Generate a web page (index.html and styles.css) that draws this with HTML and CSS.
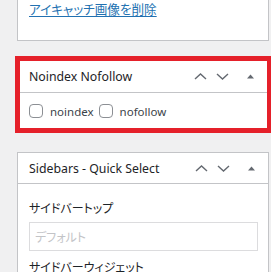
FILE: index.html
```html
<!DOCTYPE html>
<html lang="ja">
<head>
<meta charset="utf-8">
<link rel="stylesheet" href="styles.css">
</head>
<body>
<div class="postbox top-box">
  <a class="remove-link" href="#">アイキャッチ画像を削除</a>
</div>
<div class="highlight">
  <div class="box-header">
    <span class="box-title">Noindex Nofollow</span>
    <div class="box-actions">
      <span class="act"><svg width="13" height="7" viewBox="0 0 13 7"><polyline points="1,6 6.5,1 12,6" /></svg></span>
      <span class="act"><svg width="13" height="7" viewBox="0 0 13 7"><polyline points="1,1 6.5,6 12,1" /></svg></span>
      <span class="act tri"><svg width="7" height="5" viewBox="0 0 7 5"><polygon points="0,4.5 3.5,0.5 7,4.5" /></svg></span>
    </div>
  </div>
  <div class="nn-body">
    <label class="chk"><span class="cb"></span>noindex</label>
    <label class="chk"><span class="cb"></span>nofollow</label>
  </div>
</div>
<div class="postbox sidebars">
  <div class="box-header">
    <span class="box-title">Sidebars - Quick Select</span>
    <div class="box-actions">
      <span class="act"><svg width="13" height="7" viewBox="0 0 13 7"><polyline points="1,6 6.5,1 12,6" /></svg></span>
      <span class="act"><svg width="13" height="7" viewBox="0 0 13 7"><polyline points="1,1 6.5,6 12,1" /></svg></span>
      <span class="act tri"><svg width="7" height="5" viewBox="0 0 7 5"><polygon points="0,4.5 3.5,0.5 7,4.5" /></svg></span>
    </div>
  </div>
  <div class="sb-body">
    <div class="sb-label">サイドバートップ</div>
    <div class="sb-input">デフォルト</div>
    <div class="sb-label next">サイドバーウィジェット</div>
  </div>
</div>
</body>
</html>
```
FILE: styles.css
```css
html, body {
  margin: 0;
  padding: 0;
}
body {
  background: #f0f0f1;
  overflow: hidden;
  width: 271px;
  height: 272px;
  font-family: "Noto Sans", "Noto Sans CJK JP", sans-serif;
  color: #1d2327;
}
.postbox {
  margin-left: 17px;
  width: 252px;
  box-sizing: border-box;
  background: #fff;
  border: 1px solid #c3c4c7;
}
.top-box {
  border-top: none;
  height: 41px;
  padding-left: 11px;
}
.remove-link {
  display: block;
  font-family: "Noto Sans CJK JP", sans-serif;
  font-feature-settings: "palt";
  font-size: 12.6px;
  line-height: 18px;
  color: #2271b1;
  text-decoration: underline;
  text-underline-offset: 2px;
}
.highlight {
  margin-top: 15px;
  margin-left: 15px;
  width: 257px;
  height: 77px;
  box-sizing: border-box;
  border: 5px solid #e5202a;
  background: #fff;
}
.box-header {
  display: flex;
  align-items: center;
  justify-content: space-between;
  height: 31px;
  border-bottom: 1px solid #c3c4c7;
}
.highlight .box-header {
  padding-left: 9px;
  padding-right: 6px;
}
.sidebars {
  margin-top: 19px;
}
.sidebars .box-header {
  height: 30px;
  padding-left: 11px;
  padding-right: 6px;
}
.box-title {
  font-size: 12.3px;
  color: #1d2327;
}
.box-actions {
  display: flex;
  align-items: center;
}
.act {
  display: flex;
  width: 22px;
  justify-content: center;
  align-items: center;
}
.act.tri {
  margin-left: 6px;
}
.act polyline {
  fill: none;
  stroke: #646970;
  stroke-width: 1.4;
}
.act polygon {
  fill: #646970;
}
.nn-body {
  display: flex;
  align-items: center;
  padding-left: 9px;
  height: 36px;
  font-size: 11.5px;
  color: #3c434a;
}
.chk {
  display: flex;
  align-items: center;
  margin-right: 5px;
}
.cb {
  width: 14px;
  height: 14px;
  box-sizing: border-box;
  border: 1px solid #8c8f94;
  border-radius: 4px;
  margin-right: 7px;
  background: #fff;
}
.sb-body {
  padding: 15px 10px 0 11px;
}
.sb-label {
  font-family: "Noto Sans CJK JP", sans-serif;
  font-feature-settings: "palt";
  font-size: 12px;
  line-height: 18px;
  color: #1d2327;
}
.sb-input {
  margin-top: 5px;
  height: 29px;
  box-sizing: border-box;
  border: 1px solid #dcdcde;
  padding-left: 5px;
  font-family: "Noto Sans CJK JP", sans-serif;
  font-feature-settings: "palt";
  font-size: 12px;
  line-height: 27px;
  color: #c3c4c7;
}
.sb-label.next {
  margin-top: 7px;
}
```
